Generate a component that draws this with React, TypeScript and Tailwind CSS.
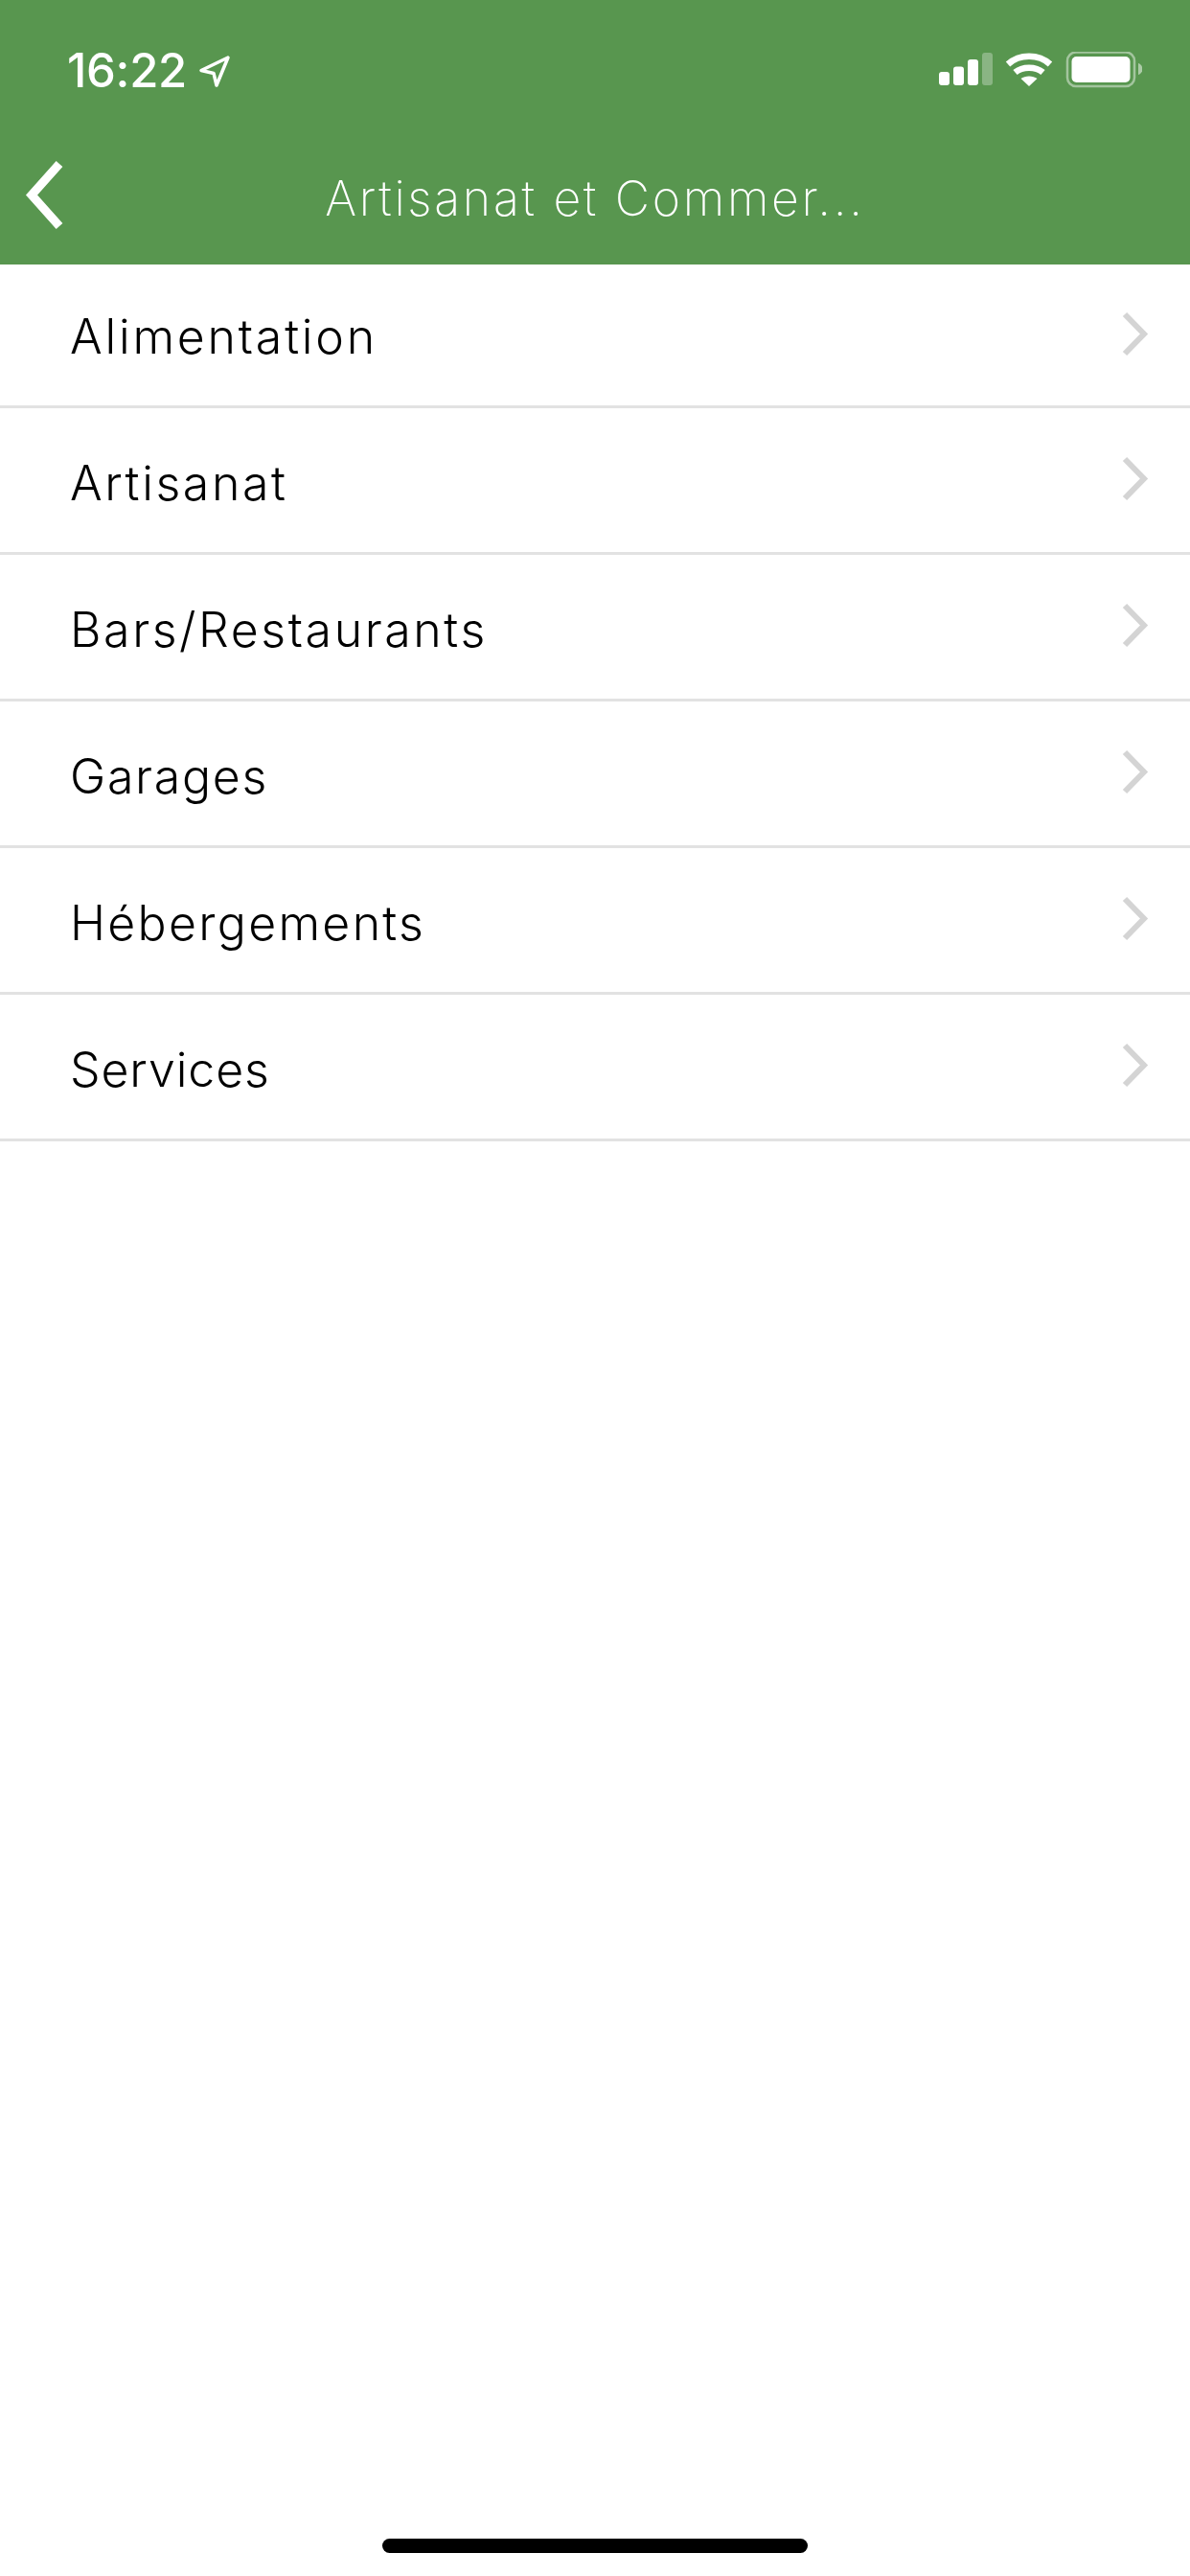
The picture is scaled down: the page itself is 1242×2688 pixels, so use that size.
const items = [
  { label: "Alimentation", tracking: "tracking-[2.8px]" },
  { label: "Artisanat", tracking: "tracking-[2.6px]" },
  { label: "Bars/Restaurants", tracking: "tracking-[2.6px]" },
  { label: "Garages", tracking: "tracking-[1.7px]" },
  { label: "Hébergements", tracking: "tracking-[2.3px]" },
  { label: "Services", tracking: "tracking-[0.9px]" },
];

function StatusIcons() {
  return (
    <svg width="212" height="38" viewBox="0 0 212 38" className="block" fill="none">
      <rect x="0" y="21" width="11" height="14" rx="3" fill="#fff" />
      <rect x="15" y="15.5" width="11" height="19.5" rx="3" fill="#fff" />
      <rect x="30" y="8" width="11" height="27" rx="3" fill="#fff" />
      <rect x="45" y="1" width="11" height="34" rx="3" fill="#fff" fillOpacity="0.3" />
      <path d="M72 13.5C84 2.5 104 2.500 116 13.500" stroke="#fff" strokeWidth="6.500" strokeLinecap="butt" transform="translate(0,-0.5)" />
      <path d="M79.500 21.500C87 15 101 15 108.500 21.500" stroke="#fff" strokeWidth="6.500" />
      <path d="M94 36L85.500 28C90 24.500 98 24.500 102.500 28Z" fill="#fff" />
      <rect x="134" y="0.500" width="70" height="35.500" rx="9" stroke="#fff" strokeOpacity="0.45" strokeWidth="2.500" />
      <rect x="138.500" y="5" width="61" height="27" rx="5" fill="#fff" />
      <path d="M208 12C211 13 212.500 15.500 212.500 18S211 23 208 24Z" fill="#fff" fillOpacity="0.5" />
    </svg>
  );
}

export default function App() {
  return (
    <div className="flex h-[2688px] w-[1242px] flex-col overflow-hidden bg-white font-['Inter','Liberation_Sans',sans-serif]">
      <header className="h-[276px] bg-[#58964f] text-white">
        <div className="flex h-[150px] items-start justify-between pl-[70px] pr-[50px] pt-[47px]">
          <div className="flex items-start gap-[11px]">
            <span className="text-[49px] leading-[54px] font-medium tracking-[-0.3px]">16:22</span>
            <svg width="36" height="36" viewBox="0 0 36 36" className="mt-[10px]" fill="none">
              <path d="M32 3L4 16.500L17 19.500L20 32Z" stroke="#fff" strokeWidth="3.500" strokeLinejoin="round" />
            </svg>
          </div>
          <div className="pt-[7px]"><StatusIcons /></div>
        </div>
        <div className="relative flex h-[126px] items-start justify-center">
          <svg width="44" height="76" viewBox="0 0 44 76" className="absolute left-[24px] top-[16px]" fill="none">
            <path d="M38 5L9 37.500L38 70" stroke="#fff" strokeWidth="9" />
          </svg>
          <h1 className="pt-[27px] text-[50px] leading-[60px] font-extralight tracking-[2.7px] whitespace-nowrap">Artisanat et Commer...</h1>
        </div>
      </header>
      <ul className="flex flex-col">
        {items.map((item, i) => (
          <li
            key={item.label}
            className={`flex items-center justify-between border-b-[3px] border-[#e2e2e2] pl-[73px] pr-[43px] ${i === 0 ? "h-[150px]" : "h-[153px]"}`}
          >
            <span className={`text-[50px] leading-[60px] font-light text-black ${i === 0 ? "pt-[3px]" : "pt-[6px]"} ${item.tracking}`}>{item.label}</span>
            <svg width="30" height="48" viewBox="0 0 30 48" className="mb-[2px]" fill="none">
              <path d="M5 3L25 23.500L5 44" stroke="#d4d4d4" strokeWidth="6" />
            </svg>
          </li>
        ))}
      </ul>
      <div className="mt-auto mb-[24px] flex justify-center">
        <div className="h-[15px] w-[444px] rounded-full bg-black" />
      </div>
    </div>
  );
}
